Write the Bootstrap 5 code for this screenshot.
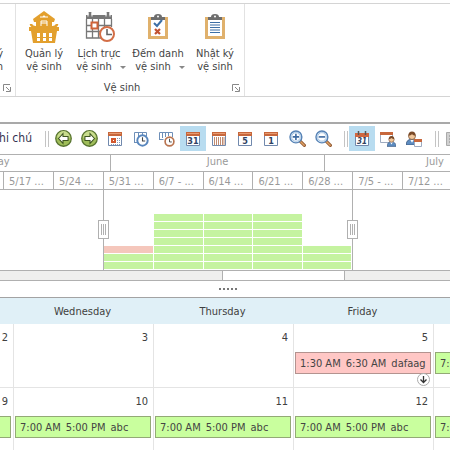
<!DOCTYPE html>
<html lang="vi">
<head>
<meta charset="utf-8">
<meta name="viewport" content="width=device-width, initial-scale=1">
<title>Vệ sinh</title>
<link href="https://cdn.jsdelivr.net/npm/bootstrap@5.3.0/dist/css/bootstrap.min.css" rel="stylesheet">
<style>
body{font-family:"DejaVu Sans Condensed","DejaVu Sans",sans-serif;font-size:11px;line-height:13px;color:#444;background:#fff}
button{font-family:inherit;border:0;background:none;padding:0;color:inherit}
svg{display:block;flex:none}
.ribbon{margin-top:3px;height:94px;border-top:1px solid #d4d4d4;border-bottom:1px solid #d4d4d4}
.rgroup{padding:6px 0 2px}
.rgroup-prev{width:16px;border-right:1px solid #e2e2e2}
.rgroup-main{width:229px;border-right:1px solid #e2e2e2}
.tool{white-space:nowrap;text-align:center;padding-top:1px}
.tool-text{padding-top:37px}
.tool svg.pic{margin:0 auto 4px}
.w-a{width:56px}.w-b{width:54px}.w-c{width:64px}.w-d{width:50px}
.caret{display:inline-block;border:3px solid transparent;border-top-color:#888;border-bottom:0;margin-left:8px;margin-right:-4px;vertical-align:middle}
.gfoot{height:13px}
.viewbar{margin-top:25px;height:32px;padding-bottom:1px;border-top:2px solid #a9a9a9;color:#33334f;font-size:12px}
.viewlabel{width:32px;margin-right:13px}
.grip{width:4px;height:16px;margin-right:1px;border:solid #c4c4c4;border-width:0 1px;flex:none}
.vbtn{width:26px;height:25px;flex:none;display:flex;align-items:center;justify-content:center}
.vbtn.on{background:#b8dcf0}
.scale{color:#999;border-top:1px solid #b0b0b0}
.months{height:16px}
.months>div{flex:none;border-right:1px solid #b0b0b0;overflow:hidden}
.m-may{width:111px}.m-june{width:214px}.m-july{width:221px}
.full{width:221px;flex:none}
.weeks{display:grid;grid-template-columns:4px repeat(8,minmax(0,1fr)) 47px}
.weekrow{border-top:1px solid #b0b0b0;border-bottom:1px solid #b0b0b0;height:19px}
.weekrow>div{border-right:1px solid #b0b0b0;padding-left:5px;line-height:19px;white-space:nowrap;overflow:hidden}
.weekrow>div:first-child{padding:0}
.chart{height:80px;align-items:end}
.load i{display:block;height:7px;margin:0 1px 1px 0;background:#c5f3a0}
.load i.hot{background:#f5c7bc}
.edge{align-self:stretch;border-right:1px solid #b0b0b0}
.handle{top:30px;right:-6px;width:11px;height:19px;border:1px solid #b0b0b0;background:#fff}
.handle::before{content:"";width:5px;height:11px;border:solid #b0b0b0;border-width:0 1px;background:linear-gradient(90deg,#fff 1px,#b0b0b0 1px 2px,#fff 2px)}
.slider{height:11px;border:solid #b0b0b0;border-width:1px 0;background:#efefee}
.thumb{width:123px;margin-left:222px;border:solid #b0b0b0;border-width:0 1px;background:#fff}
.splitter{height:16px;column-gap:2px;padding-left:6px}
.splitter i{width:2px;height:2px;background:#777}
.month{table-layout:fixed;border-collapse:separate;border-spacing:0;width:100%;border-top:1px solid #a3a3a3;color:#404040}
.month th{height:26px;background:#e0f0f7;font-weight:400;text-align:center;padding:0 3px 0 0}
.month td{height:64px;border:solid #e4e4e4;border-width:0 1px 1px 0;padding:0;vertical-align:top}
.c-first{width:14px}.c-last{width:16px}
.num{height:28px;line-height:28px;text-align:right;padding-right:5px}
.appt{display:block;height:22px;line-height:21px;margin:0 2px 0 1px;padding-left:4px;border:1px solid #93a976;background:#c9ff9e;color:#444;text-decoration:none;white-space:nowrap;overflow:hidden}
.appt.red{background:#ffc7c5;border-color:#b3938f}
.appt span{margin-right:5px}
.cut{margin-left:0}
.more{right:3px;top:49px}
</style>
<script src="https://cdn.jsdelivr.net/npm/bootstrap@5.3.0/dist/js/bootstrap.bundle.min.js"></script>
</head>
<body>
<svg width="0" height="0" class="position-absolute" aria-hidden="true">
<defs>
<symbol id="launch" viewBox="0 0 8 8"><path d="M.5 7V.5H7M3 3l3.500 3.500M7.500 3v4.500H3" fill="none" stroke="#888"/></symbol>
<symbol id="cal" viewBox="0 0 16 16"><path d="M1.500 1.500h13v13h-13z" fill="#fff" stroke="#7189ad"/><path d="M1 1h14v4H1z" fill="#c7673c"/><path d="M2 2h12v1H2z" fill="#e79a70"/></symbol>
<symbol id="clip" viewBox="0 0 22 27"><path d="M1 4h20v22H1z" fill="#e0b16c"/><path d="M4 5h14v18H4z" fill="#fff"/><path d="M4 4h14v3H4z" fill="#6e6e6e"/><path d="M7 4q0-3 4-3t4 3z" fill="#6e6e6e"/><circle cx="11" cy="3.500" r="1" fill="#fff"/></symbol>
<symbol id="clock" viewBox="0 0 12 12"><circle cx="6" cy="6" r="4.800" fill="#fff" stroke="currentColor" stroke-width="1.800"/><path d="M6 3v3.500h2.500" fill="none" stroke="#444"/></symbol>
<symbol id="person" viewBox="0 0 10 12"><path d="M0 12q0-5 5-5t5 5z" fill="#5d8cc0" stroke="#38557c" stroke-width=".7"/><path d="M3.500 7.500 5 10l1.500-2.500z" fill="#fff"/><circle cx="5" cy="4.300" r="3" fill="#f1c79b" stroke="#6d4527" stroke-width=".6"/><path d="M2 4q0-3.500 3-3.500T8 4Q6 4 5 2.800 4 4 2 4" fill="#7a4a28"/></symbol>
<symbol id="lens" viewBox="0 0 16 16"><path d="m10 10 4.500 4.500" stroke="#925b35" stroke-width="3" stroke-linecap="round"/><path d="m11 11 3.300 3.300" stroke="#e0a164" stroke-width="1.300" stroke-linecap="round"/><circle cx="6.500" cy="6.500" r="5.600" fill="#d9eaf8" stroke="#5682b5" stroke-width="1.300"/><circle cx="6.500" cy="6.500" r="4" fill="#fff" stroke="#94b6da" stroke-width=".7"/></symbol>
<symbol id="ball" viewBox="0 0 16 16"><circle cx="8" cy="8" r="7.300" fill="#9fbd59" stroke="#587430" stroke-width="1.200"/><path d="M2 7a6 6 0 0 1 12 0q-6 2-12 0" fill="#c8dc8d"/><path d="m3.300 8 4.200-4.500v2.700h4.800v3.600H7.500v2.700z" fill="#fff" stroke="#3f5622"/></symbol>
</defs>
</svg>
<div class="d-flex flex-column vh-100 overflow-hidden">
  <header class="ribbon d-flex flex-shrink-0">
    <div class="rgroup rgroup-prev d-flex flex-column justify-content-between align-items-end overflow-hidden">
      <button class="tool tool-text text-end pe-2 me-1">Đăng ký<br>vệ sinh</button>
      <button class="gfoot me-1" aria-label="Mở hộp thoại"><svg width="8" height="8"><use href="#launch"/></svg></button>
    </div>
    <div class="rgroup rgroup-main d-flex flex-column justify-content-between">
      <div class="d-flex">
        <button class="tool w-a"><svg class="pic" width="32" height="32" viewBox="0 0 32 32"><path d="M16 0 27 8l-1 3h-2v5H8v-5H6L5 8z" fill="#e3a02e"/><path d="M12 6h8M13 12h6M13 15v-5h6v5" fill="none" stroke="#fff"/><path d="m14.500 6 1.500-2 1.500 2" fill="#fff"/><path d="M3 13c0 3 4 4 13 4s13-1 13-4" fill="none" stroke="#e3a02e" stroke-width="2.500"/><path d="M1 16h30v4H1zM3 20h26l-2 12H5z" fill="#e3a02e"/><path d="M9 22h3v4H9zm6 0h3v4h-3zm6 0h3v4h-3zM9 27h3v3H9zm6 0h3v3h-3zm6 0h3v3h-3z" fill="#fff"/></svg>Quản lý<br>vệ sinh</button>
        <button class="tool w-b"><svg class="pic" width="32" height="32" viewBox="0 0 32 32"><path d="M3 4h26v4H3z" fill="#777"/><path d="M7 1v5M25 1v5" stroke="#777" stroke-width="3"/><path d="M5 1.500v4M9 1.500v4M23 1.500v4M27 1.500v4" stroke="#fff"/><path d="M3.500 8v19H18M3.500 14.500h25M3.500 20.500h16M9.500 8v19M15.500 8v19M21.500 8v8M28.500 8v8" fill="none" stroke="#777" stroke-width="1.300"/><path d="M8.500 11.500h6v6h-6z" fill="#fff" stroke="#cf6339" stroke-width="2"/><circle cx="24" cy="23" r="7" fill="#fff" stroke="#d36e46" stroke-width="2"/><path d="M24 18v5.500h5" fill="none" stroke="#666" stroke-width="1.600"/></svg>Lịch trực<br>vệ sinh<span class="caret"></span></button>
        <button class="tool w-c"><svg class="pic" width="32" height="32" viewBox="0 0 32 32"><use href="#clip" x="5" y="2" width="22" height="27"/><path d="m12 12 3 3 5-6" fill="none" stroke="#3d6fa5" stroke-width="2"/><path d="m13 18 5 5m0-5-5 5" stroke="#c25230" stroke-width="2.200"/></svg>Đếm danh<br>vệ sinh<span class="caret"></span></button>
        <button class="tool w-d"><svg class="pic" width="32" height="32" viewBox="0 0 32 32"><use href="#clip" x="5" y="2" width="22" height="27"/><path d="M11 11.500h10M11 14h10M11 16.500h10M11 19h10M11 21.500h10" stroke="#3d6fa5"/></svg>Nhật ký<br>vệ sinh</button>
      </div>
      <div class="gfoot d-flex align-items-center">
        <span class="flex-fill text-center pe-1">Vệ sinh</span>
        <button class="me-1" aria-label="Mở hộp thoại"><svg width="8" height="8"><use href="#launch"/></svg></button>
      </div>
    </div>
  </header>

  <nav class="viewbar d-flex align-items-center flex-shrink-0">
    <span class="viewlabel d-flex justify-content-end text-nowrap flex-shrink-0 overflow-hidden">Ghi chú</span>
    <span class="grip"></span>
    <button class="vbtn" aria-label="Back"><svg width="17" height="17"><use href="#ball"/></svg></button>
    <button class="vbtn" aria-label="Forward"><svg width="17" height="17" viewBox="0 0 16 16"><use href="#ball" width="16" height="16" transform="matrix(-1 0 0 1 16 0)"/></svg></button>
    <button class="vbtn" aria-label="Today"><svg width="16" height="16"><use href="#cal"/><path d="M4 7h5v5H4z" fill="#d2572e"/><path d="M6 9h1v1H6z" fill="#fff"/><path d="M10 7.500h4M10 9.500h4M10 11.500h4M4 13.500h9" stroke="#8899b5" stroke-dasharray="1 1"/></svg></button>
    <button class="vbtn" aria-label="Day view"><svg width="16" height="16"><path d="M1.500 11V1.500h12V5M5.500 1v5M9.500 1v3M1 11.500h3" fill="none" stroke="#6e8fb8"/><use href="#clock" x="3" y="3" width="13" height="13" color="#5886bd"/></svg></button>
    <button class="vbtn" aria-label="Work week"><svg width="16" height="16"><path d="M.5 9V1.500h13V6M3.500 1v6M6.500 1v5M9.500 1v4M.5 8.500h4" fill="none" stroke="#6e8fb8"/><use href="#clock" x="5" y="5" width="11" height="11" color="#b97450"/></svg></button>
    <button class="vbtn on" aria-label="Month view"><svg width="16" height="16"><use href="#cal"/><text x="8" y="13" text-anchor="middle" font-size="9" font-weight="700" fill="#2f4263">31</text></svg></button>
    <button class="vbtn" aria-label="Timeline view"><svg width="16" height="16"><use href="#cal"/><path d="M3.500 6v8M5.500 6v8M7.500 6v8M9.500 6v8M11.500 6v8M13 6v8" stroke="#c18b70"/></svg></button>
    <button class="vbtn" aria-label="Five days"><svg width="16" height="16"><use href="#cal"/><text x="8" y="13" text-anchor="middle" font-size="9" font-weight="700" fill="#2f4263">5</text></svg></button>
    <button class="vbtn" aria-label="One day"><svg width="16" height="16"><use href="#cal"/><text x="8" y="13" text-anchor="middle" font-size="9" font-weight="700" fill="#2f4263">1</text></svg></button>
    <button class="vbtn" aria-label="Zoom in"><svg width="17" height="17" viewBox="0 0 16 16"><use href="#lens"/><path d="M3.500 6.500h6M6.500 3.500v6" stroke="#3c69a0" stroke-width="1.500"/></svg></button>
    <button class="vbtn" aria-label="Zoom out"><svg width="17" height="17" viewBox="0 0 16 16"><use href="#lens"/><path d="M3.500 6.500h6" stroke="#3c69a0" stroke-width="1.500"/></svg></button>
    <span class="grip ms-2"></span>
    <button class="vbtn on" aria-label="Group by none"><svg width="16" height="16"><path d="M1.500 3.500h13v11h-13z" fill="#fff" stroke="#7189ad"/><path d="M1 2h14v4H1z" fill="#d06740"/><path d="M4.500 0v4M11.500 0v4" stroke="#555" stroke-width="1.500"/><text x="8" y="13" text-anchor="middle" font-size="8" font-weight="700" font-style="italic" fill="#2f4263">31</text></svg></button>
    <button class="vbtn" aria-label="Group by date"><svg width="16" height="16"><path d="M.5 1.500h12v10H.5z" fill="#fff" stroke="#9eabc0"/><path d="M0 1h13v3H0z" fill="#c7673c"/><use href="#person" x="7" y="4" width="9" height="12"/></svg></button>
    <button class="vbtn" aria-label="Group by resource"><svg width="16" height="16"><use href="#person" x="0" y="0" width="12" height="14"/><path d="M8.500 8.500h7v7h-7z" fill="#fff" stroke="#9eabc0"/><path d="M8 8h8v3H8z" fill="#c7673c"/></svg></button>
    <span class="grip ms-2"></span>
    <button class="vbtn" aria-label="Scales"><svg width="16" height="16"><path d="M1.500 1.500h13v13h-13z" fill="#d0d0d0" stroke="#aaa"/><path d="M4 5h8M4 8h8M4 11h8" stroke="#888"/></svg></button>
  </nav>

  <section class="scale flex-shrink-0">
    <div class="months d-flex overflow-hidden">
      <div class="m-may d-flex justify-content-end"><span class="full text-center">May</span></div>
      <div class="m-june text-center">June</div>
      <div class="m-july text-center">July</div>
    </div>
    <div class="weeks weekrow">
      <div></div><div>5/17 ...</div><div>5/24 ...</div><div>5/31 ...</div><div>6/7 - ...</div><div>6/14 ...</div><div>6/21 ...</div><div>6/28 ...</div><div>7/5 - ...</div><div class="border-0">7/12 ...</div>
    </div>
    <div class="weeks chart">
      <div></div><div></div>
      <div class="edge position-relative"><span class="handle position-absolute d-flex align-items-center justify-content-center"></span></div>
      <div class="load"><i class="hot"></i><i></i><i></i></div>
      <div class="load"><i></i><i></i><i></i><i></i><i></i><i></i><i></i></div>
      <div class="load"><i></i><i></i><i></i><i></i><i></i><i></i><i></i></div>
      <div class="load"><i></i><i></i><i></i><i></i><i></i><i></i><i></i></div>
      <div class="load edge position-relative d-flex flex-column justify-content-end"><i></i><i></i><i></i><span class="handle position-absolute d-flex align-items-center justify-content-center"></span></div>
    </div>
    <div class="slider d-flex"><div class="thumb"></div></div>
  </section>
  <div class="splitter d-flex justify-content-center align-items-center flex-shrink-0"><i></i><i></i><i></i><i></i><i></i></div>

  <table class="month">
    <colgroup><col class="c-first"><col><col><col><col class="c-last"></colgroup>
    <thead><tr><th></th><th scope="col">Wednesday</th><th scope="col">Thursday</th><th scope="col">Friday</th><th></th></tr></thead>
    <tbody>
      <tr>
        <td><div class="num">2</div></td>
        <td><div class="num">3</div></td>
        <td><div class="num">4</div></td>
        <td class="position-relative"><div class="num">5</div><a href="#" class="appt red"><span>1:30 AM</span><span>6:30 AM</span>dafaag</a>
          <button class="more position-absolute" aria-label="More"><svg width="13" height="13"><circle cx="6.500" cy="6.500" r="6" fill="#fff" stroke="#aaa"/><path d="M6.500 3v6.500M3.500 6.500l3 3 3-3" fill="none" stroke="#333" stroke-width="1.300"/></svg></button></td>
        <td class="border-end-0"><div class="num"></div><a href="#" class="appt me-0 border-end-0">7:00 AM</a></td>
      </tr>
      <tr>
        <td><div class="num">9</div><a href="#" class="appt cut border-start-0" aria-label="Tuesday"></a></td>
        <td><div class="num">10</div><a href="#" class="appt"><span>7:00 AM</span><span>5:00 PM</span>abc</a></td>
        <td><div class="num">11</div><a href="#" class="appt"><span>7:00 AM</span><span>5:00 PM</span>abc</a></td>
        <td><div class="num">12</div><a href="#" class="appt"><span>7:00 AM</span><span>5:00 PM</span>abc</a></td>
        <td class="border-end-0"><div class="num"></div><a href="#" class="appt me-0 border-end-0">7:00 AM</a></td>
      </tr>
    </tbody>
  </table>
</div>
</body>
</html>
